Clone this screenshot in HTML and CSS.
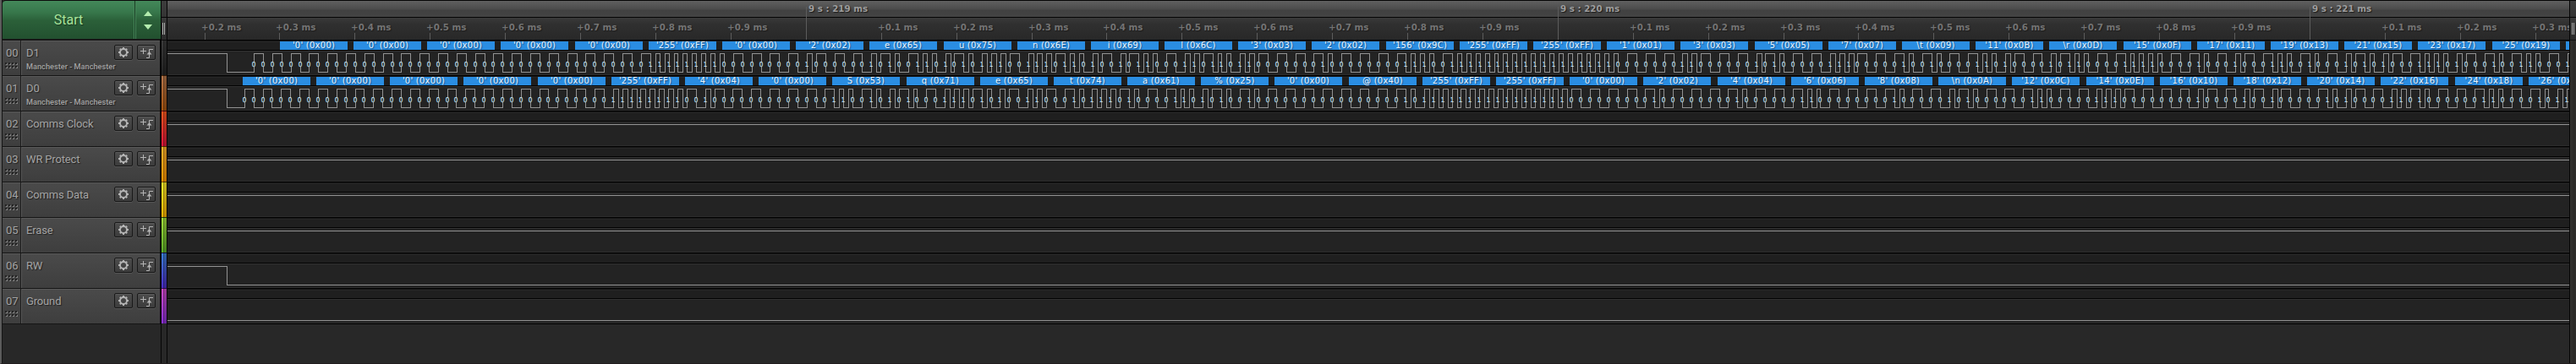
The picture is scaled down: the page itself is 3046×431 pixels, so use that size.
FILE: index.html
```html
<!DOCTYPE html>
<html lang="en">
<head>
<meta charset="utf-8">
<title>Logic Analyzer</title>
<link rel="stylesheet" href="styles.css">
</head>
<body>
<div class="app">
  <aside class="sidebar">
    <div class="start">
      <button class="start-main">Start</button>
      <button class="start-step">
        <svg width="10" height="22" viewBox="0 0 10 22"><path d="M5 0L10 6H0zM5 22L0 16H10z"/></svg>
      </button>
    </div>
    <div class="channels" id="channels"></div>
  </aside>
  <div class="colors" id="colors"><div class="handle"></div></div>
  <main class="plot" id="plot"></main>
  <div class="rail"><div class="handle"></div></div>
</div>
<script src="app.js"></script>
</body>
</html>
```
FILE: styles.css
```css
* { box-sizing: border-box; }
body { margin: 0; background: #282828; overflow: hidden; }
.app {
  display: grid;
  grid-template-columns: 188px 8px 2840px 8px;
  width: 3046px; height: 431px;
  border-left: 2px solid #5c5c5c;
  border-bottom: 1px solid #211c1d;
  font-family: Roboto, sans-serif;
  overflow: hidden;
}
.sidebar { display: flex; flex-direction: column; border-left: 1px solid #151515; }
.start {
  display: flex; height: 47px;
  border-top: 1px solid #0c0c0c; border-bottom: 1px solid #181818;
  background: linear-gradient(#44885a 0, #37774b 30%, #2b6039 52%, #22502f 100%);
  border-radius: 4px 0 0 0;
}
.start button { border: 0; background: none; padding: 0; font-family: inherit; }
.start-main {
  width: 156px; color: #a8e39a; font-size: 16px; line-height: 45px;
  text-shadow: 1px 1px 1px #16351f;
}
.start-step {
  flex: 1; display: flex; align-items: center; justify-content: center;
  border-left: 1px solid #1a3f25 !important;
  box-shadow: inset 1px 0 #448457, -1px 0 #448457;
}
.start-step svg { fill: #b4ecae; }
.channels { border-bottom: 1px solid #151515; border-right: 1px solid #050505; }
.channel {
  display: flex; height: 42px; color: #a4a4a4;
  border-top: 1px solid #151515;
  background: linear-gradient(#585858 0, #585858 1px, #4a4a4a 1px, #3e3e3e 100%);
  text-shadow: 1px 1px 1px #202020;
}
.num {
  width: 22px; padding: 7px 0 0 4px; font-size: 13px; line-height: 16px;
  border-right: 1px solid #1c1c1c; box-shadow: 1px 0 #565656;
}
.num svg { display: block; margin: 3px 0 0 -1px; }
.info { flex: 1; padding: 7px 0 0 6px; line-height: 16px; white-space: nowrap; width: 110px; }
.name { font-size: 13px; height: 17px; letter-spacing: -.15px; }
.sub { font-size: 9.2px; font-weight: 500; line-height: 14px; }
.tools { display: flex; gap: 5px; padding: 5px 5px 0 0; }
.tool {
  width: 22px; height: 18px; padding: 0; border: 1px solid #191919; border-radius: 2px;
  background: linear-gradient(#4d4d4d, #3c3c3c);
  box-shadow: inset 0 1px #5a5a5a, 0 1px #555;
}
.tool svg { display: block; }
.info, .tools { position: relative; }
.tools { margin-left: -60px; }
.colors { background: #282828; border-right: 1px solid #050505; border-left: 1px solid #050505; }
.colors .handle, .rail .handle {
  height: 47px;
  background:
    linear-gradient(#aaa, #aaa) 1px 27px / 1px 14px no-repeat,
    linear-gradient(#aaa, #aaa) 3px 27px / 1px 14px no-repeat,
    linear-gradient(#050505 1px, #3d3d3d 1px, #343434 20px, #050505 20px, #050505 21px, #3a3a3a 21px, #2a2a2a 100%);
}
.color { height: 42px; border-top: 1px solid rgba(0,0,0,.6); }
.rail { border-left: 1px solid #050505; background: linear-gradient(90deg, #333230, #2a2927 70%, #302f2d); }
.rail .handle { border-bottom: 1px solid #111; height: 48px; background-position: 2px 27px, 4px 27px, 0 0; }
.plot { display: flex; flex-direction: column; }
.plot svg { display: block; flex: none; }
.ruler {
  background: linear-gradient(#050505 1px, #606060 1px, #4b4b4b 11px, #414141 12px, #444 20px, #050505 20px, #050505 21px, #3a3a3a 21px, #303030 28px, #282828 47px);
  font: bold 10.3px "DejaVu Sans", sans-serif;
}
.ruler text { text-shadow: 1px 1px 1px #1c1c1c; }
.major { fill: #9c9c9c; }
.minor { fill: #737373; }
.tick { fill: #5c5c5c; }
.track {
  background: linear-gradient(#020202 1px, #161616 1px, #161616 2px, #272727 2px, #272727 3px, #1f1f1f 3px, #1f1f1f 12px, #020202 12px, #020202 13px, #323232 13px, #323232 14px, #232323 14px, #232323 41px, #2d2d2d 41px);
}
.wave { fill: none; stroke: #929292; stroke-width: 1; shape-rendering: crispEdges; }
.byte { fill: #2a8de2; shape-rendering: crispEdges; }
.value { fill: #eaf5ff; font: 10px "DejaVu Sans", sans-serif; letter-spacing: .24px; text-anchor: middle; text-shadow: 1px 1px 1px #174f80; }
.gap { fill: #232323; shape-rendering: crispEdges; }
.bits { fill: #cfe9ff; stroke: #cfe9ff; stroke-width: .15; font: 8px "DejaVu Sans Condensed", "DejaVu Sans", sans-serif; font-stretch: condensed; text-rendering: geometricPrecision; }
.end { height: 1px; background: #020202; }
```
FILE: app.js
```js
const LEFT = 198, WIDTH = 2840, ROW = 42, HIGH = 16.5, LOW = 38.5;
const BYTE = 87.19, BIT = BYTE / 8, DROP = 268.5;

const d1 = ["'0'",0,"'0'",0,"'0'",0,"'0'",0,"'0'",0,"'255'",255,"'0'",0,"'2'",2,"e",0x65,"u",0x75,"n",0x6e,"i",0x69,"l",0x6c,"'3'",3,"'2'",2,"'156'",156,"'255'",255,"'255'",255,"'1'",1,"'3'",3,"'5'",5,"'7'",7,"\\t",9,"'11'",11,"\\r",13,"'15'",15,"'17'",17,"'19'",19,"'21'",21,"'23'",23,"'25'",25,"'27'",27];
const d0 = ["'0'",0,"'0'",0,"'0'",0,"'0'",0,"'0'",0,"'255'",255,"'4'",4,"'0'",0,"S",0x53,"q",0x71,"e",0x65,"t",0x74,"a",0x61,"%",0x25,"'0'",0,"@",0x40,"'255'",255,"'255'",255,"'0'",0,"'2'",2,"'4'",4,"'6'",6,"'8'",8,"\\n",10,"'12'",12,"'14'",14,"'16'",16,"'18'",18,"'20'",20,"'22'",22,"'24'",24,"'26'",26];

const channels = [
  { name: "D1", bytes: d1, start: 331.3, lead: 3, color: ["#3c3c3c", "#242424"] },
  { name: "D0", bytes: d0, start: 287.3, lead: 0, color: ["#b5764b", "#a85510"] },
  { name: "Comms Clock", level: HIGH, color: ["#ff5a1e", "#e0143c"] },
  { name: "WR Protect", level: HIGH, color: ["#ffb42c", "#ff9500"] },
  { name: "Comms Data", level: HIGH, color: ["#fff02c", "#ffb400"] },
  { name: "Erase", level: HIGH, color: ["#a5e03c", "#5cac28"] },
  { name: "RW", drop: true, color: ["#3c82d8", "#4c2cc8"] },
  { name: "Ground", level: LOW, color: ["#d04cc8", "#8a30d8"] }
];

const gear = '<svg width="20" height="16" viewBox="0 0 20 16"><g fill="none" stroke="#b4b4b4"><circle cx="10" cy="8" r="4" stroke-width="1.9"/><path stroke-width="2" d="M10 2v2M10 12v2M4 8h2M14 8h2M5.8 3.8l1.3 1.3M12.9 10.9l1.3 1.3M5.8 12.2l1.3-1.3M12.9 5.1l1.3-1.3"/></g></svg>';
const edge = '<svg width="20" height="16" viewBox="0 0 20 16"><path fill="none" stroke="#b4b4b4" d="M3 6.5h7M6.5 3v7M10 14.5h3.5V4.5H18"/><path fill="#b4b4b4" d="M13.5 7L16.5 10.5H10.5z"/></svg>';

function grip() {
  let s = "";
  for (let y = 0; y < 2; y++) for (let x = 0; x < 4; x++)
    s += `<rect x="${x * 4 + 1}" y="${y * 4 + 1}" width="2" height="2" fill="#808080"/><rect x="${x * 4}" y="${y * 4}" width="2" height="2" fill="#232323"/>`;
  return `<svg width="17" height="9">${s}</svg>`;
}

function ruler() {
  let s = "";
  for (let i = -8; i <= 23; i++) {
    const x = Math.floor(953.3 + i * 88.9);
    if (i % 10 === 0) {
      s += `<rect class="tick" x="${x}" y="8" width="1" height="39"/><text class="major" x="${x + 3}" y="14">9 s : ${219 + i / 10} ms</text>`;
    } else {
      s += `<rect class="tick" x="${x}" y="39" width="1" height="8"/><text class="minor" x="${x - 4}" y="36">+0.${(i + 10) % 10} ms</text>`;
    }
  }
  return `<svg class="ruler" width="${WIDTH}" height="47" viewBox="${LEFT} 0 ${WIDTH} 47">${s}</svg>`;
}

function decoded(ch) {
  let boxes = "", level = LOW, digits = "", gaps = "";
  let path = `M${LEFT} ${HIGH}H${DROP}V${LOW}`;
  const xs = [];
  const step = x => {
    level = level === LOW ? HIGH : LOW;
    path += `H${Math.floor(x) + .5}V${level}`;
  };
  const mark = (x, bit) => {
    if (x > LEFT + WIDTH) return;
    xs.push((Math.floor(x) - 2.3).toFixed(1));
    gaps += `M${Math.floor(x) - 2} 26h4v6h-4z`;
    digits += bit;
    step(x);
    if (bit) step(x + 6);
  };
  for (let i = ch.lead; i > 0; i--) mark(ch.start + 2 - i * BIT, 0);
  for (let i = 0; i < ch.bytes.length / 2; i++) {
    const x = ch.start + i * BYTE, left = Math.floor(x), v = ch.bytes[2 * i + 1];
    const hex = v.toString(16).toUpperCase().padStart(2, "0");
    boxes += `<rect class="byte" x="${left}" y="2" width="80" height="10"/>`;
    if (left + 15 < LEFT + WIDTH)
      boxes += `<text class="value" x="${left + 40}" y="10">${ch.bytes[2 * i]} (0x${hex})</text>`;
    for (let b = 0; b < 8; b++) mark(x + 2 + b * BIT, v >> b & 1);
  }
  return `${boxes}<path class="wave" d="${path}"/><path class="gap" d="${gaps}"/><text class="bits" y="32" x="${xs.join(" ")}">${digits}</text>`;
}

function track(ch) {
  let s;
  if (ch.bytes) s = decoded(ch);
  else if (ch.drop) s = `<path class="wave" d="M${LEFT} ${HIGH}H${DROP}V${LOW}H3038"/>`;
  else s = `<path class="wave" d="M${LEFT} ${ch.level}H3038"/>`;
  return `<svg class="track" width="${WIDTH}" height="${ROW}" viewBox="${LEFT} 0 ${WIDTH} ${ROW}">${s}</svg>`;
}

document.getElementById("channels").innerHTML = channels.map((ch, i) => `
  <div class="channel">
    <div class="num">0${i}${grip()}</div>
    <div class="info"><div class="name">${ch.name}</div>${ch.bytes ? '<div class="sub">Manchester - Manchester</div>' : ""}</div>
    <div class="tools"><button class="tool">${gear}</button><button class="tool">${edge}</button></div>
  </div>`).join("");
document.getElementById("colors").innerHTML += channels.map(ch =>
  `<div class="color" style="background:linear-gradient(90deg,transparent 2px,rgba(0,0,0,.4) 2px,rgba(0,0,0,.4) 3px,rgba(0,0,0,.25) 3px),linear-gradient(${ch.color})"></div>`).join("");
document.getElementById("plot").innerHTML = ruler() + channels.map(track).join("") + '<div class="end"></div>';
```
